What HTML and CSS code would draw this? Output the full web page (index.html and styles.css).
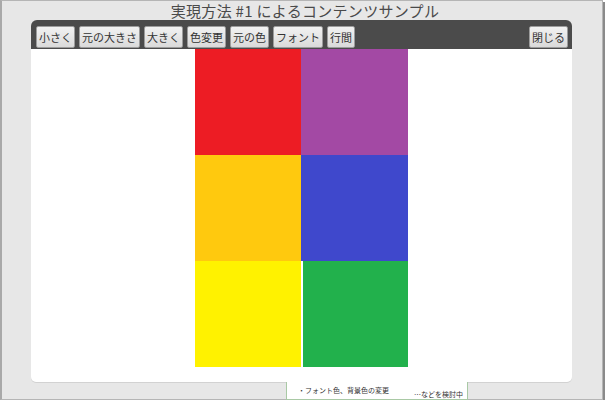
FILE: index.html
```html
<!DOCTYPE html>
<html lang="ja">
<head>
<meta charset="utf-8">
<link rel="stylesheet" href="styles.css">
</head>
<body>
<div class="frame">
  <h1 class="title">実現方法 #1 によるコンテンツサンプル</h1>
  <div class="window">
    <div class="toolbar">
      <div class="tools">
        <button class="btn">小さく</button>
        <button class="btn">元の大きさ</button>
        <button class="btn">大きく</button>
        <button class="btn">色変更</button>
        <button class="btn">元の色</button>
        <button class="btn">フォント</button>
        <button class="btn">行間</button>
      </div>
      <button class="btn">閉じる</button>
    </div>
    <div class="content">
      <div class="grid">
        <div class="cell red"></div>
        <div class="cell purple"></div>
        <div class="cell orange"></div>
        <div class="cell blue"></div>
        <div class="cell yellow"></div>
        <div class="cell green"></div>
      </div>
    </div>
  </div>
  <div class="note">
    <span class="note-a">・フォント色、背景色の変更</span>
    <span class="note-b">…などを検討中</span>
  </div>
</div>
</body>
</html>
```

FILE: styles.css
```css
html, body {
  margin: 0;
  padding: 0;
  background: #ffffff;
}
body {
  font-family: "Noto Sans CJK JP", "Noto Sans", sans-serif;
}
.frame {
  box-sizing: border-box;
  width: 603px;
  height: 400px;
  background: #e7e7e7;
  border: 1px solid #b5b5b5;
  border-left: 2px solid #a9a9a9;
  box-shadow: 2px 2px 0 #8a8a8a;
  display: flex;
  flex-direction: column;
  align-items: flex-start;
}
.title {
  margin: 0;
  width: 100%;
  height: 19px;
  font-size: 15px;
  line-height: 19px;
  font-weight: normal;
  color: #4a4a4a;
  text-align: center;
  letter-spacing: 0.3px;
  padding-left: 6px;
  box-sizing: border-box;
}
.window {
  margin-left: 29px;
  width: 541px;
  display: flex;
  flex-direction: column;
}
.toolbar {
  height: 28px;
  background: #4b4b4b;
  border-radius: 6px 6px 0 0;
  display: flex;
  align-items: flex-end;
  justify-content: space-between;
  padding: 0 4px 1px 5px;
}
.tools {
  display: flex;
  gap: 4px;
}
.btn {
  font-family: "Noto Sans CJK JP", sans-serif;
  font-size: 11px;
  line-height: 19px;
  height: 22px;
  padding: 0 2px;
  color: #333333;
  background: linear-gradient(#f2f2f2, #dadada);
  border: 1px solid #9c9c9c;
  border-radius: 2px;
  margin: 0;
}
.content {
  height: 333px;
  background: #ffffff;
  border-radius: 0 0 5px 5px;
  box-shadow: 0 1px 0 #d2d2d2;
  display: flex;
  justify-content: center;
}
.grid {
  display: grid;
  grid-template-columns: 106px 107px;
  grid-template-rows: 106px 106px 106px;
}
.red { background: #ed1c24; }
.purple { background: #a349a4; }
.orange { background: #ffc90e; }
.blue { background: #3f48cc; }
.yellow { background: #fff200; }
.green { background: #22b14c; border-left: 2px solid #ffffff; }
.note {
  margin-left: 284px;
  width: 182px;
  height: 19px;
  box-sizing: border-box;
  background: #ffffff;
  border: 1px solid #a9c9a5;
  border-top: none;
  display: flex;
  justify-content: space-between;
  padding: 0 4px 0 11px;
  font-size: 7px;
  color: #333333;
}
.note-a {
  margin-top: 3px;
}
.note-b {
  margin-top: 7px;
}
```
